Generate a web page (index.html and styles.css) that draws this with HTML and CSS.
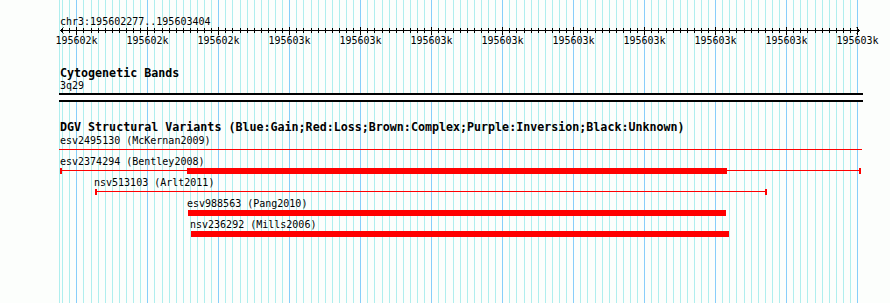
FILE: index.html
```html
<!DOCTYPE html>
<html lang="en">
<head>
	<meta charset="UTF-8">
	<title>chr3:195602277..195603404</title>
	<link rel="stylesheet" href="styles.css">
</head>
<body>
	<div id="panel">
		<svg id="grid" width="890" height="303"></svg>

		<div class="ruler">
			<div class="ruler-label">chr3:195602277..195603404</div>
			<svg id="axis" width="890" height="6"></svg>
			<div id="ticks" class="ticks"></div>
		</div>

		<div class="track band-track">
			<div class="track-title">Cytogenetic Bands</div>
			<div class="band-label">3q29</div>
			<div class="band"></div>
		</div>

		<div class="track dgv-track">
			<div class="track-title">DGV Structural Variants (Blue:Gain;Red:Loss;Brown:Complex;Purple:Inversion;Black:Unknown)</div>

			<div class="feature">
				<div class="feature-label" style="margin-left:60px">esv2495130 (McKernan2009)</div>
				<div class="glyph line" style="margin-left:59px;width:803px"></div>
			</div>
			<div class="feature">
				<div class="feature-label" style="margin-left:60px">esv2374294 (Bentley2008)</div>
				<div class="glyph line capped" style="margin-left:60px;width:801px">
					<div class="thick" style="left:125px;width:540px"></div>
				</div>
			</div>
			<div class="feature">
				<div class="feature-label" style="margin-left:94px">nsv513103 (Arlt2011)</div>
				<div class="glyph line capped" style="margin-left:95px;width:672px"></div>
			</div>
			<div class="feature">
				<div class="feature-label" style="margin-left:187px">esv988563 (Pang2010)</div>
				<div class="glyph bar" style="margin-left:188px;width:538px"></div>
			</div>
			<div class="feature">
				<div class="feature-label" style="margin-left:190px">nsv236292 (Mills2006)</div>
				<div class="glyph bar" style="margin-left:191px;width:538px"></div>
			</div>
		</div>
	</div>

	<script>
		var start = 195602277, end = 195603404;
		var scale = 800 / (end - start);
		var ns = "http://www.w3.org/2000/svg";

		function toX(bp){
			return Math.round(60 + (bp - start) * scale);
		}

		function rect(svg, x, y, w, h, color){
			var r = document.createElementNS(ns, "rect");
			r.setAttribute("x", x);
			r.setAttribute("y", y);
			r.setAttribute("width", w);
			r.setAttribute("height", h);
			r.setAttribute("fill", color);
			svg.appendChild(r);
		}

		var grid = document.getElementById("grid");
		var axis = document.getElementById("axis");
		var ticks = document.getElementById("ticks");

		// left edge of the track area
		rect(grid, 59, 0, 1, 303, "#afeeee");

		// axis line and arrows
		rect(axis, 60, 2, 800, 1, "#000");
		var arrows = document.createElementNS(ns, "path");
		arrows.setAttribute("d", "M63.5,-0.5 L60.5,2.5 L63.5,5.5 M856.5,-0.5 L859.5,2.5 L856.5,5.5");
		arrows.setAttribute("stroke", "#000");
		arrows.setAttribute("fill", "none");
		axis.appendChild(arrows);

		for(var bp = 195602280; bp <= end; bp += 10){
			var x = toX(bp);
			var major = bp % 100 == 0;

			rect(grid, x, 0, 1, 303, major ? "#87cefa" : "#afeeee");

			if(major){
				rect(axis, x, -1, 1, 8, "#000");
				var label = document.createElement("span");
				label.innerHTML = Math.round((bp - 1) / 1000) + "k";
				label.style.left = (x + 0.5) + "px";
				ticks.appendChild(label);
			}else{
				rect(axis, x, 0, 1, 5, "#000");
			}
		}
	</script>
</body>
</html>
```

FILE: styles.css
```css
*{
	margin: 0;
	padding: 0;
}
body{
	background-color: #fcfefc;
	color: #000;
	font-family: "DejaVu Sans Mono", "Liberation Mono", monospace;
	font-size: 10px;
}
#panel{
	position: relative;
	width: 890px;
	height: 303px;
	overflow: hidden;
}
#grid{
	position: absolute;
	left: 0;
	top: 0;
}
.ruler,
.track{
	position: relative;
}
.ruler-label{
	padding: 15px 0 0 60px;
	height: 13px;
	line-height: 13px;
}
#axis{
	display: block;
	overflow: visible;
}
.ticks{
	position: relative;
	height: 13px;
	line-height: 13px;
}
.ticks span{
	position: absolute;
	top: 0;
	transform: translateX(-50%);
	white-space: nowrap;
}
.track-title{
	padding-left: 60px;
	font-size: 11.67px;
	font-weight: bold;
	height: 13px;
	line-height: 13px;
	white-space: nowrap;
}
.band-track{
	margin-top: 20px;
}
.band-label{
	padding-left: 60px;
	height: 12px;
	line-height: 12px;
}
.band{
	margin: 1px 0 0 59px;
	width: 804px;
	height: 9px;
	box-sizing: border-box;
	border-top: 2px solid #000;
	border-bottom: 2px solid #000;
	background-color: #fff;
}
.dgv-track{
	margin-top: 19px;
}
.dgv-track .track-title{
	height: 11px;
}
.feature-label{
	height: 13px;
	padding-top: 2px;
	line-height: 13px;
	white-space: nowrap;
}
.glyph{
	position: relative;
	height: 6px;
	box-sizing: border-box;
}
.line{
	background: linear-gradient(#f00, #f00) 0 2px / 100% 1px no-repeat;
}
.capped{
	border-left: 2px solid #f00;
	border-right: 2px solid #f00;
}
.bar{
	background-color: #f00;
}
.thick{
	position: absolute;
	top: 0;
	height: 6px;
	background-color: #f00;
}
```
